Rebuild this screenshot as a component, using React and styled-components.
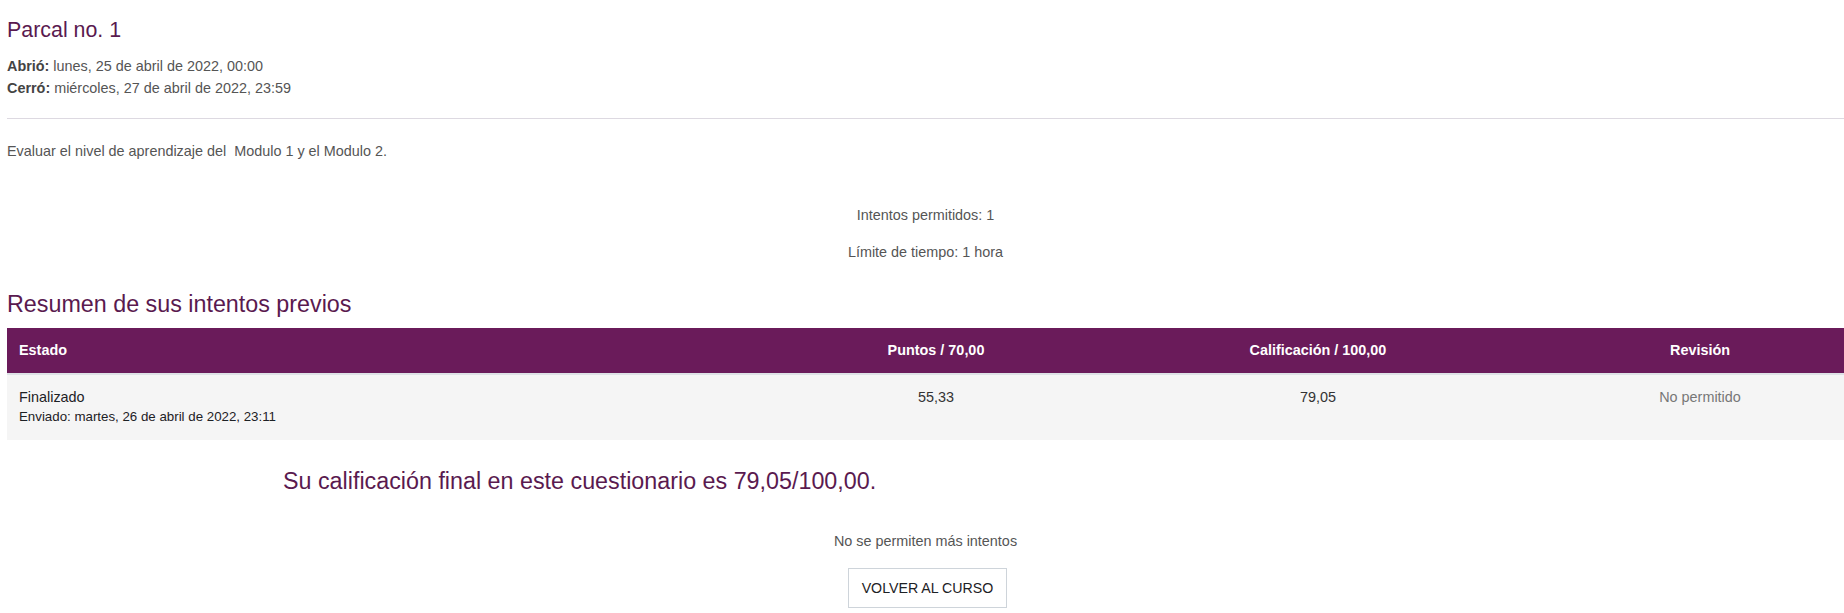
import React from "react";
import styled, { createGlobalStyle } from "styled-components";

const GlobalStyle = createGlobalStyle`
    body{
        margin:0;
        background:#fff;
        font-family:"Liberation Sans", Arial, sans-serif;
        color:#555;
        overflow-x:hidden;
    }
`;

const attempts = [
    {
        state: "Finalizado",
        sent: "Enviado: martes, 26 de abril de 2022, 23:11",
        points: "55,33",
        grade: "79,05",
        review: "No permitido",
    },
];

const App = () => {
    return (
        <>
            <GlobalStyle />
            <StyledPage>
                <StyledTitle>Parcal no. 1</StyledTitle>
                <StyledDates>
                    <div><b>Abrió:</b> lunes, 25 de abril de 2022, 00:00</div>
                    <div><b>Cerró:</b> miércoles, 27 de abril de 2022, 23:59</div>
                </StyledDates>
                <StyledRule />
                <StyledIntro>Evaluar el nivel de aprendizaje del&nbsp; Modulo 1 y el Modulo 2.</StyledIntro>
                <StyledInfo>
                    <p>Intentos permitidos: 1</p>
                    <p>Límite de tiempo: 1 hora</p>
                </StyledInfo>
                <StyledSubtitle>Resumen de sus intentos previos</StyledSubtitle>
                <StyledTable>
                    <colgroup>
                        <col style={{ width: 738 }} />
                        <col style={{ width: 382 }} />
                        <col style={{ width: 382 }} />
                        <col style={{ width: 382 }} />
                    </colgroup>
                    <thead>
                        <tr>
                            <th>Estado</th>
                            <th className="center">Puntos / 70,00</th>
                            <th className="center">Calificación / 100,00</th>
                            <th className="center">Revisión</th>
                        </tr>
                    </thead>
                    <tbody>
                        {attempts.map((a) => (
                            <tr key={a.sent}>
                                <td>
                                    <StyledState>{a.state}</StyledState>
                                    <StyledSent>{a.sent}</StyledSent>
                                </td>
                                <td className="center">{a.points}</td>
                                <td className="center">{a.grade}</td>
                                <td className="center muted">{a.review}</td>
                            </tr>
                        ))}
                    </tbody>
                </StyledTable>
                <StyledFinal>Su calificación final en este cuestionario es 79,05/100,00.</StyledFinal>
                <StyledActions>
                    <p>No se permiten más intentos</p>
                    <StyledButton>VOLVER AL CURSO</StyledButton>
                </StyledActions>
            </StyledPage>
        </>
    );
};

// Style components

const StyledPage = styled.div`
    padding: 0 0 0 7px;
    font-size:14.4px;
`;

const StyledTitle = styled.h2`
    margin:18px 0 0;
    font-size:21.4px;
    font-weight:normal;
    line-height:25px;
    color:#5a1a4f;
`;

const StyledDates = styled.div`
    margin-top:12px;
    line-height:22px;
    b{
        color:#444;
    }
`;

const StyledRule = styled.hr`
    margin:19px 0 0;
    border:0;
    border-top:1px solid #ddd9e1;
`;

const StyledIntro = styled.p`
    margin:22px 0 0;
    line-height:20px;
`;

const StyledInfo = styled.div`
    margin-top:44px;
    text-align:center;
    p{
        margin:0 0 17px;
        line-height:20px;
    }
    p:last-child{
        margin:0;
    }
`;

const StyledSubtitle = styled.h3`
    margin:29px 0 0;
    font-size:23.3px;
    font-weight:normal;
    line-height:27.6px;
    color:#5a1a4f;
`;

const StyledTable = styled.table`
    margin-top:9px;
    width:1884px;
    table-layout:fixed;
    border-collapse:collapse;
    th{
        background:#6a1b5a;
        color:#fff;
        font-weight:bold;
        text-align:left;
        padding:12px;
        line-height:21px;
        border-bottom:2px solid #dee2e6;
    }
    td{
        background:#f5f5f5;
        color:#333;
        vertical-align:top;
        padding:12px 12px 13px;
        line-height:20px;
    }
    .center{
        text-align:center;
    }
    .muted{
        color:#777;
    }
`;

const StyledState = styled.div`
    color:#1d2125;
`;

const StyledSent = styled.div`
    color:#1d2125;
    font-size:13.3px;
`;

const StyledFinal = styled.h3`
    margin:28px 0 0 276px;
    font-size:23.3px;
    font-weight:normal;
    line-height:27.6px;
    color:#5a1a4f;
`;

const StyledActions = styled.div`
    margin-top:36px;
    display:flex;
    flex-direction:column;
    align-items:center;
    p{
        margin:0;
        line-height:20px;
    }
`;

const StyledButton = styled.button`
    margin:17px 0 0 4px;
    height:40px;
    padding:0 13px;
    background:#fff;
    border:1px solid #ced4da;
    font-family:inherit;
    font-size:14.2px;
    color:#1d2125;
`;

export default App;
